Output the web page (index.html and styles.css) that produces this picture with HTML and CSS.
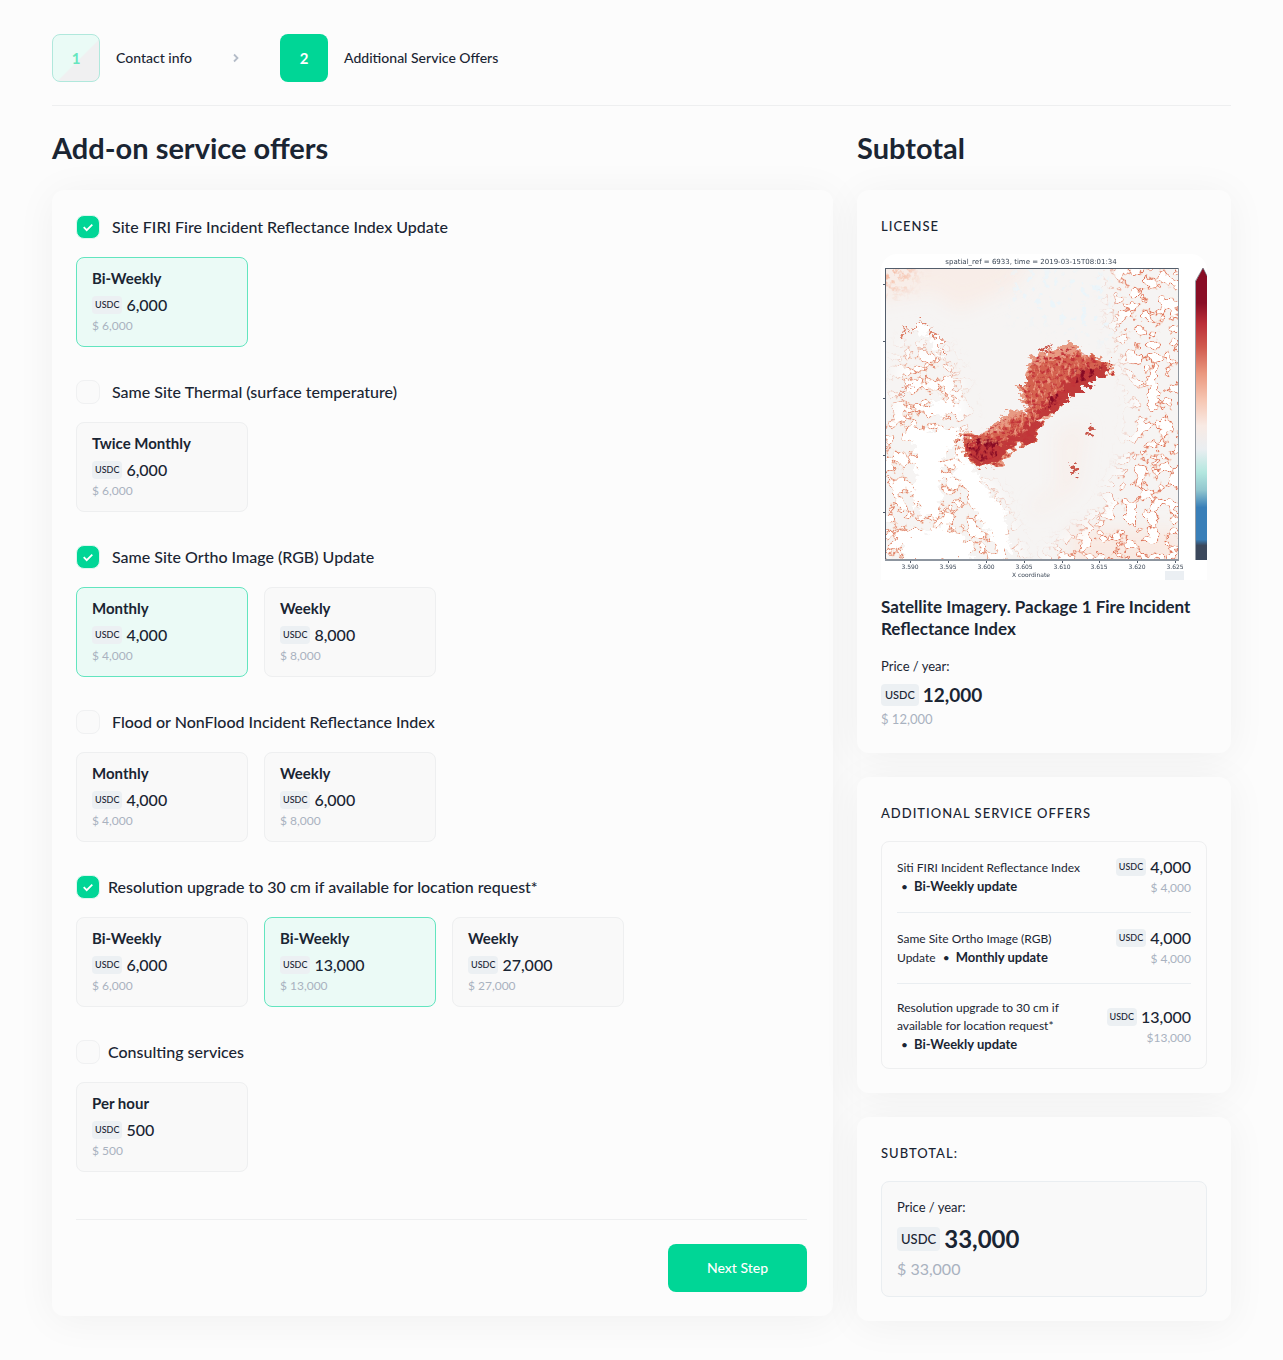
FILE: index.html
```html
<!DOCTYPE html>
<html lang="en">
<head>
<meta charset="utf-8">
<meta name="viewport" content="width=device-width, initial-scale=1">
<title>Additional Service Offers</title>
<link rel="stylesheet" href="styles.css">
</head>
<body>
<div class="page">
  <nav class="steps" aria-label="Progress">
    <div class="step">
      <span class="step-number step-done">1</span>
      <span class="step-name">Contact info</span>
    </div>
    <svg class="step-arrow" viewBox="0 0 8 10" aria-hidden="true"><path d="M2 1.5 5.5 5 2 8.5" fill="none" stroke="#b4bcc8" stroke-width="1.8"/></svg>
    <div class="step" aria-current="step">
      <span class="step-number step-current">2</span>
      <span class="step-name">Additional Service Offers</span>
    </div>
  </nav>

  <div class="columns">
    <main class="column">
      <h1 class="heading">Add-on service offers</h1>
      <form class="panel offers">
        <section class="offer">
          <label class="offer-name"><input class="tick" type="checkbox" checked>Site FIRI Fire Incident Reflectance Index Update</label>
          <div class="options">
            <label class="option"><input type="radio" name="firi" checked><span class="option-title">Bi-Weekly</span><span class="price"><span class="badge">USDC</span>6,000</span><span class="fiat">$ 6,000</span></label>
          </div>
        </section>
        <section class="offer">
          <label class="offer-name"><input class="tick" type="checkbox">Same Site Thermal (surface temperature)</label>
          <div class="options">
            <label class="option"><input type="radio" name="thermal"><span class="option-title">Twice Monthly</span><span class="price"><span class="badge">USDC</span>6,000</span><span class="fiat">$ 6,000</span></label>
          </div>
        </section>
        <section class="offer">
          <label class="offer-name"><input class="tick" type="checkbox" checked>Same Site Ortho Image (RGB) Update</label>
          <div class="options">
            <label class="option"><input type="radio" name="ortho" checked><span class="option-title">Monthly</span><span class="price"><span class="badge">USDC</span>4,000</span><span class="fiat">$ 4,000</span></label>
            <label class="option"><input type="radio" name="ortho"><span class="option-title">Weekly</span><span class="price"><span class="badge">USDC</span>8,000</span><span class="fiat">$ 8,000</span></label>
          </div>
        </section>
        <section class="offer">
          <label class="offer-name"><input class="tick" type="checkbox">Flood or NonFlood Incident Reflectance Index</label>
          <div class="options">
            <label class="option"><input type="radio" name="flood"><span class="option-title">Monthly</span><span class="price"><span class="badge">USDC</span>4,000</span><span class="fiat">$ 4,000</span></label>
            <label class="option"><input type="radio" name="flood"><span class="option-title">Weekly</span><span class="price"><span class="badge">USDC</span>6,000</span><span class="fiat">$ 8,000</span></label>
          </div>
        </section>
        <section class="offer">
          <label class="offer-name offer-name-tight"><input class="tick" type="checkbox" checked>Resolution upgrade to 30 cm if available for location request*</label>
          <div class="options">
            <label class="option"><input type="radio" name="resolution"><span class="option-title">Bi-Weekly</span><span class="price"><span class="badge">USDC</span>6,000</span><span class="fiat">$ 6,000</span></label>
            <label class="option"><input type="radio" name="resolution" checked><span class="option-title">Bi-Weekly</span><span class="price"><span class="badge">USDC</span>13,000</span><span class="fiat">$ 13,000</span></label>
            <label class="option"><input type="radio" name="resolution"><span class="option-title">Weekly</span><span class="price"><span class="badge">USDC</span>27,000</span><span class="fiat">$ 27,000</span></label>
          </div>
        </section>
        <section class="offer">
          <label class="offer-name offer-name-tight"><input class="tick" type="checkbox">Consulting services</label>
          <div class="options">
            <label class="option"><input type="radio" name="consulting"><span class="option-title">Per hour</span><span class="price"><span class="badge">USDC</span>500</span><span class="fiat">$ 500</span></label>
          </div>
        </section>
        <div class="actions"><button class="next" type="submit">Next Step</button></div>
      </form>
    </main>

    <aside class="column">
      <h2 class="heading">Subtotal</h2>
      <div class="summary">
        <section class="panel">
          <h3 class="caption">License</h3>
          <svg class="map" viewBox="0 0 326 326" role="img" aria-label="Fire reflectance map">
            <defs>
              <clipPath id="frame"><rect x="5" y="15" width="292" height="291"/></clipPath>
              <filter id="soft" x="-30%" y="-30%" width="160%" height="160%"><feGaussianBlur stdDeviation="9"/></filter>
              <filter id="ragged" x="-10%" y="-10%" width="120%" height="120%" color-interpolation-filters="sRGB">
                <feTurbulence type="fractalNoise" baseFrequency=".14 .2" numOctaves="3" seed="4"/>
                <feDisplacementMap in="SourceGraphic" scale="18" xChannelSelector="R" yChannelSelector="G"/>
              </filter>
              <filter id="edges" x="0" y="0" width="100%" height="100%" color-interpolation-filters="sRGB">
                <feTurbulence type="fractalNoise" baseFrequency=".09" numOctaves="3" seed="11"/>
                <feColorMatrix values="2 0 0 0 -.5  2 0 0 0 -.5  2 0 0 0 -.5  2 0 0 0 -.5"/>
                <feComponentTransfer>
                  <feFuncR type="table" tableValues=".97 .97 .97 .97 .97 .97 .97 .97 .97 .97 .97 .95 .87 .97 1 1 1 1 1 1 1"/>
                  <feFuncG type="table" tableValues=".88 .88 .88 .88 .88 .88 .88 .88 .88 .88 .86 .74 .46 .85 1 1 1 1 1 1 1"/>
                  <feFuncB type="table" tableValues=".83 .83 .83 .83 .83 .83 .83 .83 .83 .83 .8 .66 .36 .8 1 1 1 1 1 1 1"/>
                  <feFuncA type="table" tableValues="0 0 0 0 0 0 0 0 0 0 .2 .7 1 1 1 1 1 1 1 1 1"/>
                </feComponentTransfer>
              </filter>
              <filter id="clearings" x="0" y="0" width="100%" height="100%" color-interpolation-filters="sRGB">
                <feTurbulence type="fractalNoise" baseFrequency=".08" numOctaves="4" seed="23"/>
                <feColorMatrix values="2 0 0 0 -.5  2 0 0 0 -.5  2 0 0 0 -.5  2 0 0 0 -.5"/>
                <feComponentTransfer>
                  <feFuncR type="table" tableValues=".97 .97 .97 .97 .97 .97 .97 .97 .97 .97 .95 .88 .98 1 1 1 1 1 1 1 1"/>
                  <feFuncG type="table" tableValues=".93 .93 .93 .93 .93 .93 .93 .93 .93 .9 .78 .52 .9 1 1 1 1 1 1 1 1"/>
                  <feFuncB type="table" tableValues=".9 .9 .9 .9 .9 .9 .9 .9 .9 .86 .7 .42 .86 1 1 1 1 1 1 1 1"/>
                  <feFuncA type="table" tableValues="0 0 0 0 0 0 0 0 .1 .3 .7 1 1 1 1 1 1 1 1 1 1"/>
                </feComponentTransfer>
              </filter>
              <filter id="grain" x="0" y="0" width="100%" height="100%" color-interpolation-filters="sRGB">
                <feTurbulence type="fractalNoise" baseFrequency=".15" numOctaves="4" seed="7"/>
                <feColorMatrix values="0 0 0 0 .96  0 0 0 0 .72  0 0 0 0 .62  5 0 0 0 -2.3"/>
              </filter>
              <filter id="midgrain" x="0" y="0" width="100%" height="100%" color-interpolation-filters="sRGB">
                <feTurbulence type="fractalNoise" baseFrequency=".2 .3" numOctaves="3" seed="53"/>
                <feColorMatrix values="0 0 0 0 .76  0 0 0 0 .2  0 0 0 0 .22  5 0 0 0 -2.4" result="noise"/>
                <feComposite in="noise" in2="SourceGraphic" operator="in"/>
              </filter>
              <filter id="lightgrain" x="0" y="0" width="100%" height="100%" color-interpolation-filters="sRGB">
                <feTurbulence type="fractalNoise" baseFrequency=".3 .16" numOctaves="3" seed="9"/>
                <feColorMatrix values="0 0 0 0 .92  0 0 0 0 .6  0 0 0 0 .5  5 0 0 0 -2.7" result="noise"/>
                <feComposite in="noise" in2="SourceGraphic" operator="in"/>
              </filter>
              <filter id="darkgrain" x="0" y="0" width="100%" height="100%" color-interpolation-filters="sRGB">
                <feTurbulence type="fractalNoise" baseFrequency=".22 .16" numOctaves="3" seed="31"/>
                <feColorMatrix values="0 0 0 0 .53  0 0 0 0 .04  0 0 0 0 .14  5 0 0 0 -2.3" result="noise"/>
                <feComposite in="noise" in2="SourceGraphic" operator="in"/>
              </filter>
              <filter id="specks" x="0" y="0" width="100%" height="100%" color-interpolation-filters="sRGB">
                <feTurbulence type="fractalNoise" baseFrequency=".13" numOctaves="3" seed="17"/>
                <feColorMatrix values="0 0 0 0 .92  0 0 0 0 .96  0 0 0 0 .98  9 0 0 0 -5.3"/>
              </filter>
              <mask id="right"><g filter="url(#soft)" fill="#fff"><path d="M230 -20H330V350H130L174 296 219 262 248 205 256 145 234 75Z"/></g></mask>
              <mask id="left"><g filter="url(#soft)" fill="#fff"><path d="M22 92 60 92 74 120 84 150 84 172 96 222 118 242 150 340H-30V210L14 150Z"/></g></mask>
              <mask id="upper"><g filter="url(#soft)" fill="#fff"><path d="M125 14H236V92L176 70 130 62Z"/></g></mask>
              <mask id="corner"><g filter="url(#soft)" fill="#fff"><path d="M-20 0H36L24 36H-20Z"/></g></mask>
              <linearGradient id="scale" x1="0" y1="0" x2="0" y2="1">
                <stop offset="0" stop-color="#870c24"/><stop offset=".12" stop-color="#8a0f26"/>
                <stop offset=".19" stop-color="#bb2f38"/><stop offset=".27" stop-color="#d05a4e"/>
                <stop offset=".36" stop-color="#ea977e"/><stop offset=".45" stop-color="#f6c5b1"/>
                <stop offset=".54" stop-color="#f8eae4"/><stop offset=".62" stop-color="#eaeef1"/>
                <stop offset=".7" stop-color="#b3e7df"/><stop offset=".76" stop-color="#92c7cf"/>
                <stop offset=".82" stop-color="#397fb8"/><stop offset=".93" stop-color="#397fb8"/>
                <stop offset=".95" stop-color="#3b485c"/><stop offset="1" stop-color="#3b485c"/>
              </linearGradient>
            </defs>
            <rect width="326" height="326" fill="#fff"/>
            <g clip-path="url(#frame)">
              <rect x="4" y="14" width="294" height="293" fill="#f6f4f3"/>
              <g fill="#f9e9e2" filter="url(#soft)">
                <path d="M-20 -10H160L132 34 76 56 54 38 -20 50Z" opacity=".7"/>
                <path d="M176 178 206 168 196 236 154 262 150 250 176 236Z" opacity=".4"/>
                <path d="M190 276H300V330H190Z"/>
              </g>
              <g mask="url(#corner)"><rect x="4" y="14" width="80" height="60" filter="url(#grain)"/></g>
              <g mask="url(#upper)"><rect x="4" y="14" width="294" height="293" filter="url(#specks)"/></g>
              <g mask="url(#right)"><rect x="4" y="14" width="294" height="293" filter="url(#edges)"/></g>
              <g mask="url(#left)"><rect x="4" y="14" width="294" height="293" filter="url(#clearings)"/></g>
              <g fill="#fff" filter="url(#ragged)">
                <path d="M30 178 80 174 76 190 62 202 58 260 40 262 32 240 36 200Z"/>
                <path d="M74 202 92 214 108 240 122 252 130 300 112 284 98 262 88 236 74 222Z"/>
                <path d="M24 284 60 272 84 284 94 306H22Z"/>
                <path d="M48 150 68 146 80 152 78 158 58 162 48 160Z"/>
                <path d="M32 72 44 69 48 78 42 82Z"/><path d="M50 84 60 84 64 104 52 94Z"/>
              </g>
              <g fill="none" stroke="#dd7c63" stroke-width="1.400" filter="url(#ragged)">
                <path d="M20 86 24 76 32 78 38 68 48 72 50 80 60 84 60 94 66 104"/>
                <path d="M18 146 24 134 32 132" opacity=".7"/>
              </g>
              <g filter="url(#ragged)">
                <path fill="#e79a83" d="M149 104 164 98 192 90 206 101 229 107 230 119 211 127 195 139 178 154 165 165 161 170 154 189 132 194 121 212 98 213 84 203 78 178 98 182 112 170 128 160 124 157 147 156 138 133 151 130 144 118Z"/>
                <path fill="#d4624f" d="M152 112 196 98 228 109 228 118 196 138 174 156 162 164 154 188 132 192 118 211 98 212 84 202 80 184 112 178 150 156 142 134Z"/>
                <path fill="#c03a3a" d="M190 122 228 109 228 118 196 138 174 156 162 164 152 188 132 190 116 210 98 210 84 198 86 190 120 190 150 166Z"/>
              </g>
              <path filter="url(#midgrain)" d="M153 104 166 98 192 92 206 102 226 108 190 136 160 164 150 186 124 192 110 208 88 204 80 180 98 182 112 172 130 162 149 156 142 134 153 130 148 118Z"/>
              <path filter="url(#lightgrain)" d="M153 104 166 98 192 92 206 102 216 110 190 126 166 148 148 178 112 190 96 190 82 184 98 182 112 172 130 162 149 156 142 134 153 130 148 118Z"/>
              <path filter="url(#darkgrain)" d="M190 118 216 110 222 114 206 126 192 130ZM84 190 98 184 118 186 116 202 100 208 88 200ZM166 144 184 136 176 150 164 156Z"/>
              <g fill="#c9574b" filter="url(#ragged)">
                <path d="M204 176 212 172 213 178 206 181Z"/><path d="M189 207 194 212 197 219 191 220Z"/>
                <path d="M171 88 168 95 158 99 157 97 166 93Z"/>
              </g>
            </g>
            <path d="M4.500 14.500H297.500" stroke="#535d6b"/>
            <path d="M4.500 14V306.500" stroke="#535d6b"/>
            <path d="M297.500 14V306" stroke="#8d959f"/>
            <path d="M4 306H298" stroke="#8d959f" stroke-width="2"/>
            <path d="M2 30.500H4M2 87.500H4M2 144.500H4M2 201.500H4M2 258.500H4M29.500 307V309M67.500 307V309M105.500 307V309M143.500 307V309M181.500 307V309M218.500 307V309M256.500 307V309M294.500 307V309" stroke="#535d6b"/>
            <path d="M315 306V27L322 14 326 22V306Z" fill="url(#scale)"/>
            <path d="M314.500 306V27L322 14 326 22" fill="none" stroke="#535d6b" stroke-opacity=".6"/>
            <rect x="284" y="317" width="19" height="9" fill="#ebeff3"/>
            <g class="map-text">
              <text x="150" y="10" font-size="7">spatial_ref = 6933, time = 2019-03-15T08:01:34</text>
              <g font-size="6">
                <text x="29" y="315">3.590</text><text x="67" y="315">3.595</text><text x="105" y="315">3.600</text><text x="143" y="315">3.605</text><text x="181" y="315">3.610</text><text x="218" y="315">3.615</text><text x="256" y="315">3.620</text><text x="294" y="315">3.625</text>
                <text x="150" y="323">X coordinate</text>
              </g>
            </g>
          </svg>
          <p class="product">Satellite Imagery. Package 1 Fire Incident Reflectance Index</p>
          <p class="period">Price / year:</p>
          <p class="price price-medium"><span class="badge">USDC</span>12,000</p>
          <p class="fiat fiat-medium">$ 12,000</p>
        </section>

        <section class="panel">
          <h3 class="caption">Additional service offers</h3>
          <ul class="lines">
            <li class="line">
              <p class="line-name">Siti FIRI Incident Reflectance Index<br><span class="dot">•</span><b>Bi-Weekly update</b></p>
              <div class="line-cost"><span class="price"><span class="badge">USDC</span>4,000</span><span class="fiat">$ 4,000</span></div>
            </li>
            <li class="line">
              <p class="line-name">Same Site Ortho Image (RGB)<br>Update <span class="dot">•</span><b>Monthly update</b></p>
              <div class="line-cost"><span class="price"><span class="badge">USDC</span>4,000</span><span class="fiat">$ 4,000</span></div>
            </li>
            <li class="line">
              <p class="line-name">Resolution upgrade to 30 cm if<br>available for location request*<br><span class="dot">•</span><b>Bi-Weekly update</b></p>
              <div class="line-cost"><span class="price"><span class="badge">USDC</span>13,000</span><span class="fiat">$13,000</span></div>
            </li>
          </ul>
        </section>

        <section class="panel">
          <h3 class="caption">Subtotal:</h3>
          <div class="total">
            <p class="period">Price / year:</p>
            <p class="price price-large"><span class="badge">USDC</span>33,000</p>
            <p class="fiat fiat-large">$ 33,000</p>
          </div>
        </section>
      </div>
    </aside>
  </div>
</div>
</body>
</html>
```
FILE: styles.css
```css
* { box-sizing: border-box; }
body, h1, h2, h3, p, ul { margin: 0; padding: 0; }

body {
  background: #fcfcfc;
  color: #1a2533;
  font-family: Lato, "Liberation Sans", sans-serif;
  font-size: 14px;
}

.page { padding: 34px 52px 39px; }

/* Progress steps */
.steps {
  display: flex;
  align-items: center;
  gap: 40px;
  padding-bottom: 23px;
  border-bottom: 1px solid #eeeff0;
}
.step { display: flex; align-items: center; gap: 16px; }
.step-number {
  display: grid;
  place-items: center;
  width: 48px;
  height: 48px;
  border-radius: 8px;
  font-size: 15px;
  font-weight: 700;
}
.step-done {
  border: 1px solid #b0e8dc;
  background: linear-gradient(135deg, #eafbf6 54%, #f0f0f1 56%);
  color: #66e6bf;
}
.step-current { background: #00d696; color: #fff; }
.step-name { font-size: 14px; line-height: 20px; font-weight: 500; }
.step-arrow { width: 8px; height: 10px; }

.columns {
  display: grid;
  grid-template-columns: minmax(0, 1fr) 374px;
  align-items: start;
  gap: 24px;
  padding-top: 24px;
}
.heading {
  margin-bottom: 24px;
  font-size: 29px;
  line-height: 36px;
  font-weight: 700;
}
.panel {
  padding: 24px;
  border-radius: 12px;
  background: #fcfcfc;
  box-shadow: 0 4px 40px rgba(20, 20, 20, .05);
}

/* Offers */
.offers { display: grid; gap: 33px; padding: 25px 26px 24px 24px; }
.offer { display: grid; gap: 18px; }
.offer-name {
  display: flex;
  align-items: center;
  gap: 12px;
  font-size: 16px;
  line-height: 24px;
  font-weight: 500;
}
.offer-name-tight { gap: 8px; }
.tick {
  appearance: none;
  flex: none;
  width: 24px;
  height: 24px;
  margin: 0;
  border: 1px solid #f0f1f2;
  border-radius: 8px;
  background: #fafafa;
}
.tick:checked {
  border-color: #d9f8ee;
  background: #00d696 url("data:image/svg+xml,%3Csvg xmlns='http://www.w3.org/2000/svg' viewBox='0 0 22 22'%3E%3Cpath d='M6.700 11.200 9.700 14.200 15.300 8.600' fill='none' stroke='white' stroke-width='1.800'/%3E%3C/svg%3E") center / 22px no-repeat;
}
.options { display: flex; flex-wrap: wrap; gap: 16px; }
.option {
  position: relative;
  display: flex;
  flex-direction: column;
  width: 172px;
  padding: 10px 15px 12px;
  border: 1px solid #eeeff0;
  border-radius: 8px;
  background: #f9f9f9;
}
.option:has(:checked) { border-color: #62e5bf; background: #ebfaf6; }
.option input {
  appearance: none;
  position: absolute;
  inset: 0;
  margin: 0;
}
.option-title {
  margin-bottom: 8px;
  font-size: 15px;
  line-height: 20px;
  font-weight: 700;
}

/* Prices */
.price {
  display: flex;
  align-items: center;
  gap: 4px;
  font-size: 16px;
  line-height: 18px;
  font-weight: 500;
}
.badge {
  padding: 0 3px;
  border-radius: 4px;
  background: #ecf0f3;
  font-size: 9px;
  line-height: 18px;
  font-weight: 500;
}
.fiat {
  margin-top: 4px;
  color: #a9b2c0;
  font-size: 12px;
  line-height: 16px;
}
.price-medium { font-size: 19px; line-height: 22px; font-weight: 700; }
.price-medium .badge { padding: 0 4px; font-size: 11px; line-height: 22px; }
.fiat-medium { margin-top: 3px; font-size: 13px; line-height: 20px; }
.price-large { font-size: 24px; line-height: 24px; font-weight: 700; }
.price-large .badge { padding: 0 4px; font-size: 13px; line-height: 24px; }
.fiat-large { margin-top: 8px; font-size: 16px; line-height: 20px; }

.actions {
  display: flex;
  justify-content: flex-end;
  margin-top: 14px;
  padding-top: 24px;
  border-top: 1px solid #eeeff0;
}
.next {
  width: 139px;
  height: 48px;
  border: 0;
  border-radius: 8px;
  background: #00d696;
  color: #fff;
  font: 500 14px/20px Lato, "Liberation Sans", sans-serif;
}

/* Summary */
.summary { display: grid; gap: 24px; }
.caption {
  margin-bottom: 16px;
  font-size: 13px;
  line-height: 24px;
  font-weight: 500;
  letter-spacing: 1px;
  text-transform: uppercase;
}
.map { display: block; width: 100%; border-radius: 16px 16px 0 0; }
.map-text {
  fill: #3b4756;
  font-family: "DejaVu Sans", sans-serif;
  text-anchor: middle;
}
.product {
  margin: 16px 0;
  font-size: 17px;
  line-height: 22px;
  font-weight: 700;
}
.period { margin-bottom: 8px; font-size: 13px; line-height: 20px; }

.lines {
  padding: 0 15px;
  border: 1px solid #eeeff0;
  border-radius: 8px;
  list-style: none;
}
.line {
  display: flex;
  align-items: center;
  justify-content: space-between;
  padding: 16px 0;
}
.line + .line { border-top: 1px solid #eaeef1; }
.line:last-child { padding: 15px 0 14px; }
.line-name { font-size: 12px; line-height: 18px; white-space: nowrap; }
.line-name b { font-size: 13px; }
.dot { margin: 0 6px 0 4px; }
.line-cost { display: grid; justify-items: end; }

.total {
  padding: 15px 15px 17px;
  border: 1px solid #eaeef1;
  border-radius: 8px;
  background: #f9f9f9;
}
.total .period { margin-bottom: 10px; }
```
